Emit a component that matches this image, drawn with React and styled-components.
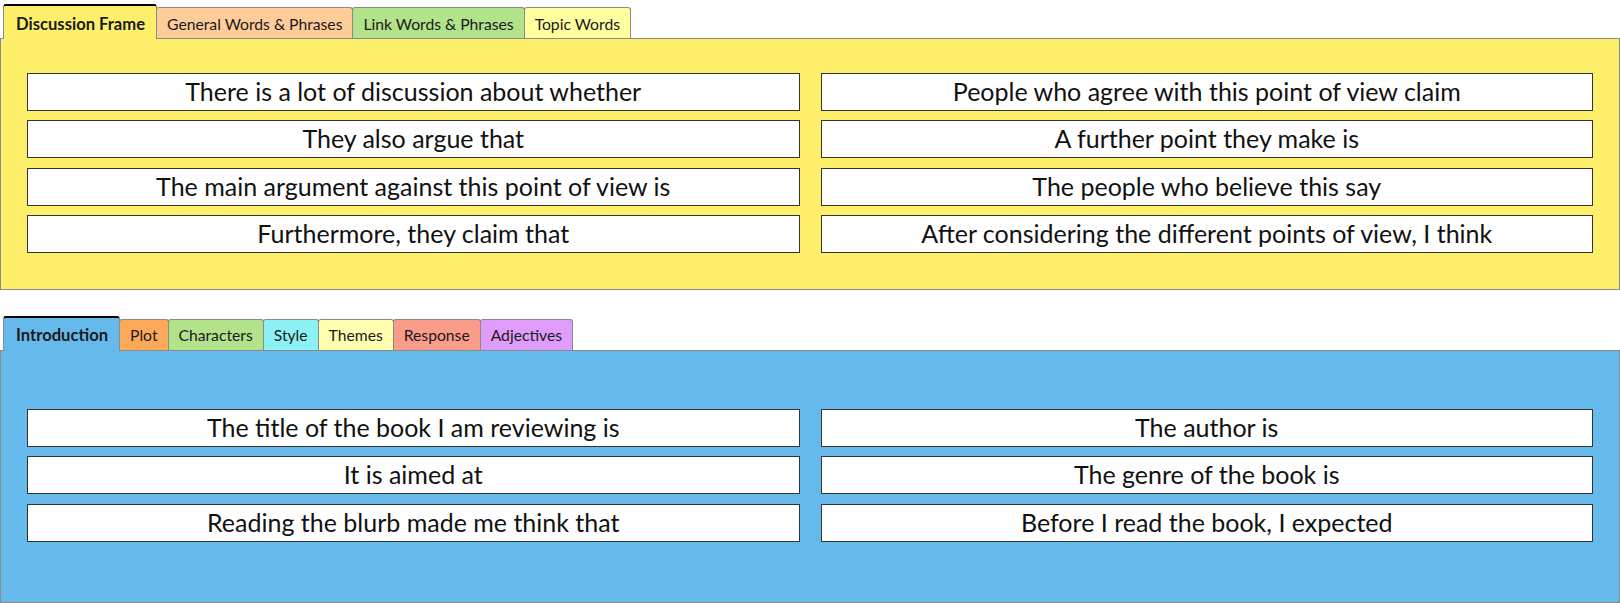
import styled, { createGlobalStyle } from "styled-components";

const GlobalStyle = createGlobalStyle`
  html, body {
    margin: 0;
    padding: 0;
    background: #ffffff;
  }
  body {
    font-family: Lato, "Open Sans", "Liberation Sans", sans-serif;
    color: #111111;
  }
`;

// 위쪽 토론 틀 패널
const discussionTabs = [
  { label: "Discussion Frame", bg: "#feef6b", active: true },
  { label: "General Words & Phrases", bg: "#fecc99" },
  { label: "Link Words & Phrases", bg: "#b2e28a" },
  { label: "Topic Words", bg: "#ffff9f" },
];

const discussionPhrases = [
  "There is a lot of discussion about whether",
  "People who agree with this point of view claim",
  "They also argue that",
  "A further point they make is",
  "The main argument against this point of view is",
  "The people who believe this say",
  "Furthermore, they claim that",
  "After considering the different points of view, I think",
];

// 아래쪽 독후감 패널
const reviewTabs = [
  { label: "Introduction", bg: "#66b9eb", active: true },
  { label: "Plot", bg: "#fea95a" },
  { label: "Characters", bg: "#b2e28a" },
  { label: "Style", bg: "#8cf1f5" },
  { label: "Themes", bg: "#ffffaf" },
  { label: "Response", bg: "#f99c8a" },
  { label: "Adjectives", bg: "#e09cfa" },
];

const reviewPhrases = [
  "The title of the book I am reviewing is",
  "The author is",
  "It is aimed at",
  "The genre of the book is",
  "Reading the blurb made me think that",
  "Before I read the book, I expected",
];

function TabbedFrame({ tabs, phrases, bg, gap, padTop, padBottom, rowGap }) {
  return (
    <Frame $gap={gap}>
      <TabStrip>
        {tabs.map((tab) => (
          <Tab key={tab.label} $bg={tab.bg} $active={tab.active}>
            {tab.label}
          </Tab>
        ))}
      </TabStrip>
      <Panel $bg={bg} $padTop={padTop} $padBottom={padBottom}>
        <PhraseGrid $rowGap={rowGap}>
          {phrases.map((text) => (
            <Phrase key={text}>{text}</Phrase>
          ))}
        </PhraseGrid>
      </Panel>
    </Frame>
  );
}

export default function App() {
  return (
    <>
      <GlobalStyle />
      <Page>
        <TabbedFrame
          tabs={discussionTabs}
          phrases={discussionPhrases}
          bg="#feef6b"
          gap={0}
          padTop={34}
          padBottom={36}
          rowGap={9.33}
        />
        <TabbedFrame
          tabs={reviewTabs}
          phrases={reviewPhrases}
          bg="#66b9eb"
          gap={26}
          padTop={58}
          padBottom={60}
          rowGap={9.5}
        />
      </Page>
    </>
  );
}

const Page = styled.div`
  width: 1620px;
  padding-top: 4px;
`;

const Frame = styled.section`
  margin-top: ${(p) => p.$gap}px;
`;

const TabStrip = styled.div`
  display: flex;
  align-items: flex-end;
  height: 34px;
  padding-left: 3px;
`;

const Tab = styled.div`
  position: relative;
  z-index: ${(p) => (p.$active ? 2 : 1)};
  display: flex;
  align-items: center;
  box-sizing: border-box;
  height: ${(p) => (p.$active ? "35px" : "31px")};
  margin-bottom: ${(p) => (p.$active ? "-1px" : "0")};
  margin-left: -1px;
  padding: ${(p) => (p.$active ? "2px 11px 0 12px" : "1px 10px 0 10px")};
  border: 1px solid #8a8a8a;
  border-top: ${(p) => (p.$active ? "2px solid #000000" : "1px solid #8a8a8a")};
  border-bottom: none;
  border-radius: 3px 3px 0 0;
  background-color: ${(p) => p.$bg};
  font-size: ${(p) => (p.$active ? "16.6px" : "15.7px")};
  font-weight: ${(p) => (p.$active ? 700 : 400)};
  color: #1a1a1a;
  white-space: nowrap;

  &:first-child {
    margin-left: 0;
  }
`;

const Panel = styled.div`
  box-sizing: border-box;
  padding: ${(p) => p.$padTop}px 26px ${(p) => p.$padBottom}px 26px;
  border: 1px solid #8a8a8a;
  background-color: ${(p) => p.$bg};
`;

const PhraseGrid = styled.div`
  display: grid;
  grid-template-columns: 1fr 1fr;
  column-gap: 21px;
  row-gap: ${(p) => p.$rowGap}px;
`;

const Phrase = styled.div`
  box-sizing: border-box;
  height: 38px;
  display: flex;
  align-items: center;
  justify-content: center;
  padding-bottom: 2px;
  border: 1px solid #333333;
  background-color: #ffffff;
  font-size: 25px;
  color: #111111;
  white-space: nowrap;
`;
